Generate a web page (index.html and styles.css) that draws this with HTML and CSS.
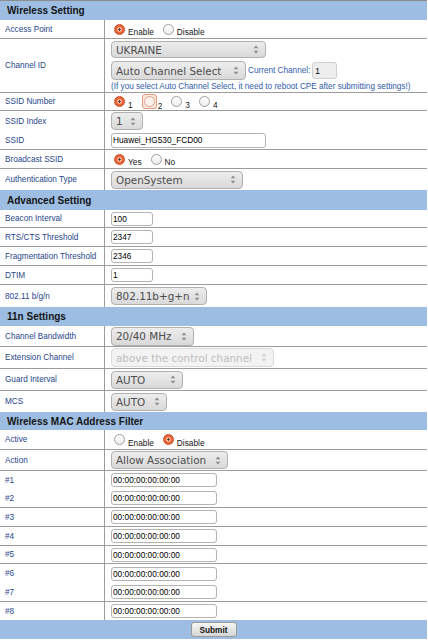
FILE: index.html
```html
<!DOCTYPE html>
<html>
<head>
<meta charset="utf-8">
<title>Wireless Setting</title>
<link rel="stylesheet" href="styles.css">
</head>
<body>
<div class="page">
  <div class="hdr h19">Wireless Setting</div>

  <div class="row h19">
    <div class="lbl">Access Point</div>
    <div class="val">
      <label class="opt"><input type="radio" name="ap" checked><span>Enable</span></label>
      <label class="opt"><input type="radio" name="ap"><span>Disable</span></label>
    </div>
  </div>

  <div class="row h54">
    <div class="lbl">Channel ID</div>
    <div class="val col">
      <div class="sel w155 sh17"><span>UKRAINE</span><svg class="spin" viewBox="0 0 6 11" width="6" height="11"><path d="M0.6 4.2 3 1.4 5.4 4.2Z M0.6 6.8 3 9.6 5.4 6.8Z"/></svg></div>
      <div class="line">
        <div class="sel w135 sh19"><span>Auto Channel Select</span><svg class="spin" viewBox="0 0 6 11" width="6" height="11"><path d="M0.6 4.2 3 1.4 5.4 4.2Z M0.6 6.8 3 9.6 5.4 6.8Z"/></svg></div>
        <span class="blue cur">Current Channel:</span>
        <input class="ro" type="text" value="1" readonly>
      </div>
      <div class="blue note">(If you select Auto Channel Select, it need to reboot CPE after submitting settings!)</div>
    </div>
  </div>

  <div class="row h18">
    <div class="lbl">SSID Number</div>
    <div class="val">
      <label class="opt"><input type="radio" name="sn" checked><span>1</span></label>
      <label class="opt"><span class="focus"><input type="radio" name="sn" class="fr"></span><span class="ft">2</span></label>
      <label class="opt"><input type="radio" name="sn"><span>3</span></label>
      <label class="opt"><input type="radio" name="sn"><span>4</span></label>
    </div>
  </div>

  <div class="row nb h20">
    <div class="lbl">SSID Index</div>
    <div class="val">
      <div class="sel w32 sh18"><span>1</span><svg class="spin" viewBox="0 0 6 11" width="6" height="11"><path d="M0.6 4.2 3 1.4 5.4 4.2Z M0.6 6.8 3 9.6 5.4 6.8Z"/></svg></div>
    </div>
  </div>

  <div class="row h19">
    <div class="lbl">SSID</div>
    <div class="val"><input class="txt w155 th15" type="text" value="Huawei_HG530_FCD00"></div>
  </div>

  <div class="row h19">
    <div class="lbl">Broadcast SSID</div>
    <div class="val">
      <label class="opt"><input type="radio" name="bs" checked><span>Yes</span></label>
      <label class="opt"><input type="radio" name="bs"><span>No</span></label>
    </div>
  </div>

  <div class="row nb h21">
    <div class="lbl">Authentication Type</div>
    <div class="val">
      <div class="sel w132 sh18"><span>OpenSystem</span><svg class="spin" viewBox="0 0 6 11" width="6" height="11"><path d="M0.6 4.2 3 1.4 5.4 4.2Z M0.6 6.8 3 9.6 5.4 6.8Z"/></svg></div>
    </div>
  </div>

  <div class="hdr h20">Advanced Setting</div>

  <div class="row h18">
    <div class="lbl">Beacon Interval</div>
    <div class="val"><input class="txt w42" type="text" value="100"></div>
  </div>
  <div class="row h19">
    <div class="lbl">RTS/CTS Threshold</div>
    <div class="val"><input class="txt w42" type="text" value="2347"></div>
  </div>
  <div class="row h19">
    <div class="lbl">Fragmentation Threshold</div>
    <div class="val"><input class="txt w42" type="text" value="2346"></div>
  </div>
  <div class="row h19">
    <div class="lbl">DTIM</div>
    <div class="val"><input class="txt w42" type="text" value="1"></div>
  </div>
  <div class="row nb h22">
    <div class="lbl">802.11 b/g/n</div>
    <div class="val">
      <div class="sel w96 sh18"><span>802.11b+g+n</span><svg class="spin" viewBox="0 0 6 11" width="6" height="11"><path d="M0.6 4.2 3 1.4 5.4 4.2Z M0.6 6.8 3 9.6 5.4 6.8Z"/></svg></div>
    </div>
  </div>

  <div class="hdr h19">11n Settings</div>

  <div class="row h21">
    <div class="lbl">Channel Bandwidth</div>
    <div class="val">
      <div class="sel w83 sh19"><span>20/40 MHz</span><svg class="spin" viewBox="0 0 6 11" width="6" height="11"><path d="M0.6 4.2 3 1.4 5.4 4.2Z M0.6 6.8 3 9.6 5.4 6.8Z"/></svg></div>
    </div>
  </div>
  <div class="row h22">
    <div class="lbl">Extension Channel</div>
    <div class="val">
      <div class="sel dis w163 sh19"><span>above the control channel</span><svg class="spin" viewBox="0 0 6 11" width="6" height="11"><path d="M0.6 4.2 3 1.4 5.4 4.2Z M0.6 6.8 3 9.6 5.4 6.8Z"/></svg></div>
    </div>
  </div>
  <div class="row h22">
    <div class="lbl">Guard Interval</div>
    <div class="val">
      <div class="sel w72 sh18"><span>AUTO</span><svg class="spin" viewBox="0 0 6 11" width="6" height="11"><path d="M0.6 4.2 3 1.4 5.4 4.2Z M0.6 6.8 3 9.6 5.4 6.8Z"/></svg></div>
    </div>
  </div>
  <div class="row nb h21">
    <div class="lbl">MCS</div>
    <div class="val">
      <div class="sel w56 sh18"><span>AUTO</span><svg class="spin" viewBox="0 0 6 11" width="6" height="11"><path d="M0.6 4.2 3 1.4 5.4 4.2Z M0.6 6.8 3 9.6 5.4 6.8Z"/></svg></div>
    </div>
  </div>

  <div class="hdr h18">Wireless MAC Address Filter</div>

  <div class="row h20">
    <div class="lbl">Active</div>
    <div class="val">
      <label class="opt"><input type="radio" name="ac"><span>Enable</span></label>
      <label class="opt"><input type="radio" name="ac" checked><span>Disable</span></label>
    </div>
  </div>
  <div class="row h21">
    <div class="lbl">Action</div>
    <div class="val">
      <div class="sel w117 sh18"><span>Allow Association</span><svg class="spin" viewBox="0 0 6 11" width="6" height="11"><path d="M0.6 4.2 3 1.4 5.4 4.2Z M0.6 6.8 3 9.6 5.4 6.8Z"/></svg></div>
    </div>
  </div>

  <div class="row nb h18"><div class="lbl">#1</div><div class="val"><input class="txt w106" type="text" value="00:00:00:00:00:00"></div></div>
  <div class="row h19"><div class="lbl">#2</div><div class="val"><input class="txt w106" type="text" value="00:00:00:00:00:00"></div></div>
  <div class="row h19"><div class="lbl">#3</div><div class="val"><input class="txt w106" type="text" value="00:00:00:00:00:00"></div></div>
  <div class="row h19"><div class="lbl">#4</div><div class="val"><input class="txt w106" type="text" value="00:00:00:00:00:00"></div></div>
  <div class="row h18"><div class="lbl">#5</div><div class="val"><input class="txt w106" type="text" value="00:00:00:00:00:00"></div></div>
  <div class="row nb h19"><div class="lbl">#6</div><div class="val"><input class="txt w106" type="text" value="00:00:00:00:00:00"></div></div>
  <div class="row h19"><div class="lbl">#7</div><div class="val"><input class="txt w106" type="text" value="00:00:00:00:00:00"></div></div>
  <div class="row nb h18"><div class="lbl">#8</div><div class="val"><input class="txt w106" type="text" value="00:00:00:00:00:00"></div></div>

  <div class="submitbar"><button class="btn" type="button">Submit</button></div>
</div>
</body>
</html>
```
FILE: styles.css
```css
* { box-sizing: border-box; }
html, body { margin: 0; padding: 0; background: #fff; }
body { font-family: "Liberation Sans", Arial, sans-serif; }

.page { width: 427px; border-top: 1px solid #8c8c8c; }

.hdr {
  background: #9dbde2;
  font-weight: bold;
  font-size: 10px;
  color: #141414;
  padding-left: 7px;
  display: flex;
  align-items: center;
}

.row { display: flex; border-bottom: 1px solid #9c9c9c; }
.row.nb { border-bottom: none; }

.h18 { height: 18px; }
.h19 { height: 19px; }
.h20 { height: 20px; }
.h21 { height: 21px; }
.h22 { height: 22px; }
.h54 { height: 54px; }

.lbl {
  width: 105px;
  flex: none;
  border-right: 1px solid #9c9c9c;
  padding-left: 5px;
  display: flex;
  align-items: center;
  font-size: 8.2px;
  color: #27468a;
  white-space: nowrap;
}

.val {
  flex: 1;
  padding-left: 6px;
  display: flex;
  align-items: center;
}
.val.col {
  flex-direction: column;
  align-items: flex-start;
  justify-content: flex-start;
  padding-top: 2px;
}
.line { display: flex; align-items: center; margin-top: 3px; }

.blue { color: #2f5cab; font-size: 8.2px; }
.cur { margin-left: 2px; }
.note { margin-top: 2px; line-height: 9px; white-space: nowrap; }

.ro {
  width: 25px;
  height: 17px;
  margin-left: 2px;
  border: 1px solid #cfcfcf;
  border-radius: 3px;
  background: #ededed;
  font: 8.3px "Liberation Sans", Arial, sans-serif;
  color: #000;
  padding: 0 2px;
}

/* select-like controls */
.sel {
  display: flex;
  align-items: center;
  justify-content: space-between;
  border: 1px solid #b0b0b0;
  border-radius: 4px;
  background: linear-gradient(#ededed, #d9d9d9);
  padding: 0 6px 0 4px;
  font-family: "DejaVu Sans", sans-serif;
  font-size: 10.4px;
  color: #4d4d4d;
  white-space: nowrap;
  flex: none;
}
.sel .spin { fill: #8d8d8d; flex: none; }
.sel.dis { background: #f3f3f3; border-color: #dadada; color: #bdbdbd; }
.sel.dis .spin { fill: #cfcfcf; }

.sh17 { height: 17px; }
.sh18 { height: 18px; }
.sh19 { height: 19px; }

.w32 { width: 32px; }
.w42 { width: 42px; }
.w56 { width: 56px; }
.w72 { width: 72px; }
.w83 { width: 83px; }
.w96 { width: 96px; }
.w106 { width: 106px; }
.w117 { width: 117px; }
.w132 { width: 132px; }
.w135 { width: 135px; }
.w155 { width: 155px; }
.w163 { width: 163px; }

/* text inputs */
.txt {
  height: 14px;
  border: 1px solid #b3b3b3;
  border-radius: 3px;
  background: #fff;
  font: 8.3px "Liberation Sans", Arial, sans-serif;
  color: #000;
  padding: 0 1px;
  margin: 0;
}
.th15 { height: 15px; }

/* radios */
.opt {
  display: flex;
  align-items: flex-end;
  margin-left: 9px;
  font-size: 8.3px;
  color: #151515;
}
.opt:first-child { margin-left: 3px; }
.opt > span:last-child { margin-left: 3px; line-height: 1; margin-bottom: -2px; }
.opt > span.ft { margin-left: 1px; margin-bottom: -1px; }

input[type=radio] {
  -webkit-appearance: none;
  appearance: none;
  margin: 0;
  width: 11px;
  height: 11px;
  border-radius: 50%;
  border: 1px solid #9e9e9e;
  background: linear-gradient(#ffffff, #ececec);
  flex: none;
}
input[type=radio]:checked {
  border-color: #c9522b;
  background: radial-gradient(circle at 50% 50%, #5a2a1b 0, #5a2a1b 0.9px, #f9c9b3 1.4px, #f3a07f 2.2px, #ee6a40 2.9px, #e85c33 4.5px);
}
.focus {
  display: flex;
  padding: 1px;
  border: 1px solid #e49a7e;
  border-radius: 3px;
  background: #fde6dc;
}
input[type=radio].fr { border-color: #d8a595; background: #fdf1ec; }

.submitbar {
  height: 19px;
  background: #9dbde2;
  display: flex;
  justify-content: center;
  align-items: center;
}
.btn {
  width: 46px;
  height: 15px;
  border: 1px solid #9a9a9a;
  border-radius: 3px;
  background: linear-gradient(#f6f6f6, #d6d6d6);
  font: bold 8.3px "Liberation Sans", Arial, sans-serif;
  color: #151515;
  padding: 0;
}
```
